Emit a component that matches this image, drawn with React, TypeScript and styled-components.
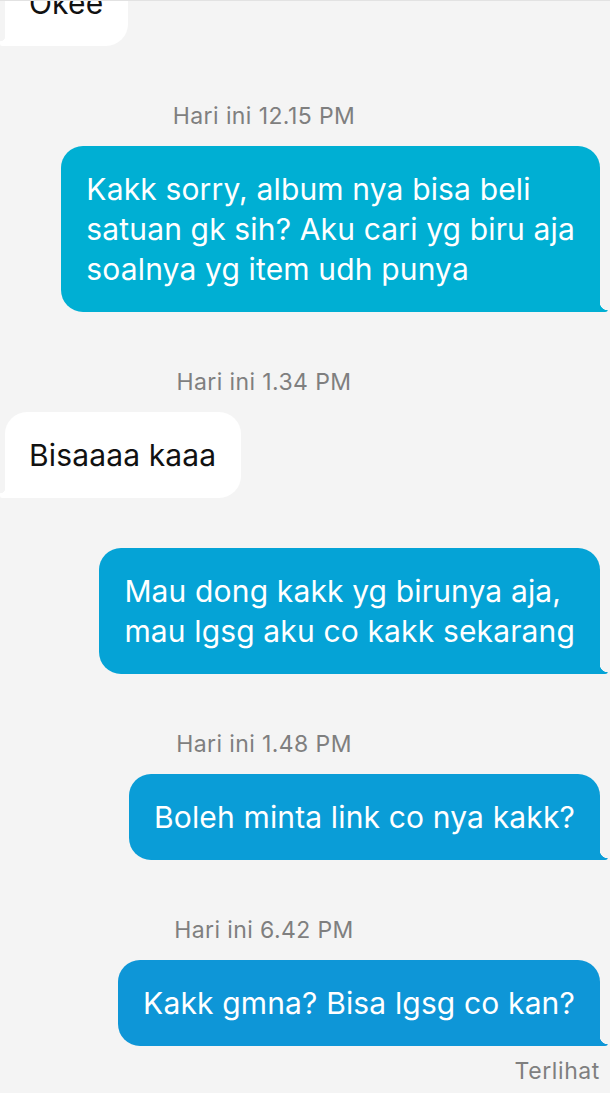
import styled, { createGlobalStyle } from 'styled-components';

const GlobalStyle = createGlobalStyle`
  html, body {
    margin: 0;
    padding: 0;
    background: #f4f4f4;
  }
  body {
    font-family: Inter, "Noto Sans", "Liberation Sans", sans-serif;
    overflow: hidden;
  }
`;

const Screen = styled.div`
  width: 610px;
  height: 1093px;
  background: #f4f4f4;
  border-top: 1px solid #e2e2e2;
  box-sizing: border-box;
  overflow: hidden;
  display: flex;
  flex-direction: column;
`;

const Thread = styled.div`
  display: flex;
  flex-direction: column;
  margin-top: -41px;
`;

const Stamp = styled.div`
  margin-top: 58px;
  margin-bottom: 18px;
  padding-right: 82px;
  text-align: center;
  font-size: 23px;
  letter-spacing: 0.4px;
  line-height: 24px;
  color: #7f7f7f;
`;

const Row = styled.div<{ $mine: boolean; $gap: number }>`
  display: flex;
  justify-content: ${p => (p.$mine ? 'flex-end' : 'flex-start')};
  padding: ${p => (p.$mine ? '0 10px 0 0' : '0 0 0 5px')};
  margin-top: ${p => p.$gap}px;
`;

const Bubble = styled.div<{ $mine: boolean; $color: string }>`
  position: relative;
  background: ${p => p.$color};
  color: ${p => (p.$mine ? '#ffffff' : '#111111')};
  font-size: 30px;
  letter-spacing: 0.15px;
  line-height: 40px;
  padding: 23px 25px 23px ${p => (p.$mine ? 25 : 24)}px;
  border-radius: 22px;
  ${p => (p.$mine ? 'border-bottom-right-radius: 0;' : 'border-bottom-left-radius: 0;')}
  white-space: nowrap;

  &::after {
    content: '';
    position: absolute;
    bottom: 0;
    ${p => (p.$mine ? 'right: -8px;' : 'left: -5px;')}
    width: ${p => (p.$mine ? 8 : 5)}px;
    height: 10px;
    background: ${p =>
      p.$mine
        ? `radial-gradient(circle at 100% 0, transparent 8px, ${p.$color} 8.6px)`
        : `radial-gradient(circle at 0 0, transparent 5px, ${p.$color} 5.6px)`};
    ${p => (p.$mine ? 'border-bottom-right-radius: 3px;' : 'border-bottom-left-radius: 2px;')}
  }
`;

const Seen = styled.div`
  margin-top: 13px;
  padding-right: 10px;
  text-align: right;
  font-size: 23px;
  letter-spacing: 0.6px;
  line-height: 24px;
  color: #7f7f7f;
`;

type Item =
  | { kind: 'stamp'; text: string }
  | { kind: 'msg'; mine: boolean; lines: string[]; color: string; gap?: number };

const items: Item[] = [
  { kind: 'msg', mine: false, lines: ['Okee'], color: '#ffffff' },
  { kind: 'stamp', text: 'Hari ini 12.15 PM' },
  {
    kind: 'msg',
    mine: true,
    color: '#00afd3',
    lines: ['Kakk sorry, album nya bisa beli', 'satuan gk sih? Aku cari yg biru aja', 'soalnya yg item udh punya'],
  },
  { kind: 'stamp', text: 'Hari ini 1.34 PM' },
  { kind: 'msg', mine: false, lines: ['Bisaaaa kaaa'], color: '#ffffff' },
  {
    kind: 'msg',
    mine: true,
    color: '#05a3d6',
    gap: 50,
    lines: ['Mau dong kakk yg birunya aja,', 'mau lgsg aku co kakk sekarang'],
  },
  { kind: 'stamp', text: 'Hari ini 1.48 PM' },
  { kind: 'msg', mine: true, color: '#0a9dd7', lines: ['Boleh minta link co nya kakk?'] },
  { kind: 'stamp', text: 'Hari ini 6.42 PM' },
  { kind: 'msg', mine: true, color: '#0e96d7', lines: ['Kakk gmna? Bisa lgsg co kan?'] },
];

export default function App() {
  return (
    <>
      <GlobalStyle />
      <Screen>
        <Thread>
          {items.map((it, i) =>
            it.kind === 'stamp' ? (
              <Stamp key={i}>{it.text}</Stamp>
            ) : (
              <Row key={i} $mine={it.mine} $gap={it.gap ?? 0}>
                <Bubble $mine={it.mine} $color={it.color}>
                  {it.lines.map((l, j) => (
                    <div key={j}>{l}</div>
                  ))}
                </Bubble>
              </Row>
            )
          )}
          <Seen>Terlihat</Seen>
        </Thread>
      </Screen>
    </>
  );
}
